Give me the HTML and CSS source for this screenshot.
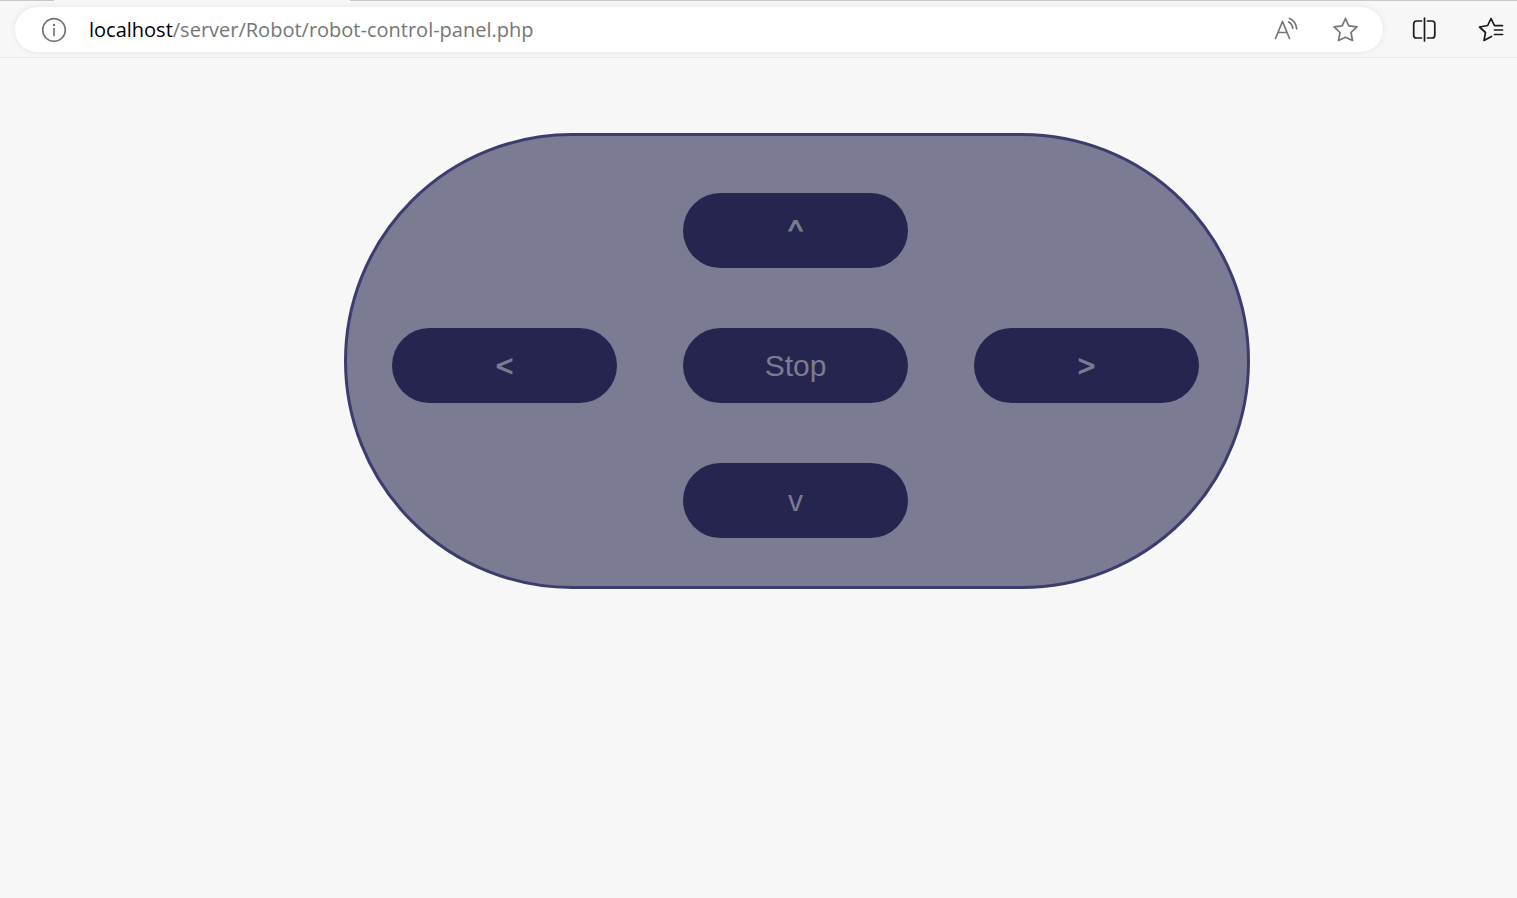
FILE: index.html
```html
<!DOCTYPE html>
<html lang="en">
<head>
<meta charset="utf-8">
<title>Robot control panel</title>
<link rel="stylesheet" href="styles.css">
</head>
<body>
<header class="browser">
  <div class="tab-strip"><span class="tab-edge tab-edge-left"></span><span class="tab-edge tab-edge-right"></span></div>
  <div class="toolbar">
    <div class="address-bar">
      <button class="icon-button" type="button" aria-label="Site information">
        <svg class="icon" viewBox="0 0 26 26"><circle cx="13" cy="13" r="11.3"/><path d="M13 11.5v7"/><circle class="dot" cx="13" cy="8" r="1.2"/></svg>
      </button>
      <a class="url" href="#"><span class="url-host">localhost</span>/server/Robot/robot-control-panel.php</a>
      <button class="icon-button" type="button" aria-label="Read aloud">
        <svg class="icon" viewBox="0 0 26 26"><path d="M3.500 21.500 10.500 4.500 17.500 21.500M6 15.500h9M16.500 5c2.300 1 3.900 3.400 4.200 6.300M17.500 1.500c4 1.500 6.500 5 7.200 10.400"/></svg>
      </button>
      <button class="icon-button" type="button" aria-label="Add to favorites">
        <svg class="icon" viewBox="0 0 26 26"><path d="M13.500 1.500 16.800 8.900 25 9.900 19 15.500 20.500 23.500 13.500 20.200 6.500 23.500 8 15.500 2 9.900 10.200 8.900Z"/></svg>
      </button>
    </div>
    <div class="actions">
      <button class="icon-button dark" type="button" aria-label="Split screen">
        <svg class="icon" viewBox="0 0 26 26"><path d="M13.500 1v23M10.500 4H5.500A2.800 2.800 0 0 0 2.700 6.800v11.400A2.800 2.800 0 0 0 5.500 21h5M16.500 4h4.500a2.800 2.800 0 0 1 2.800 2.800v11.400a2.800 2.800 0 0 1-2.800 2.800h-4.500"/></svg>
      </button>
      <button class="icon-button dark" type="button" aria-label="Favorites">
        <svg class="icon" viewBox="0 0 26 26"><path d="M24.500 8.700H16.500L13 1.500 9.700 8.500 1.500 10 7.500 15.500 6 23.500 13.500 19.500M16.500 13H24.500M16.500 17.500H24.500"/></svg>
      </button>
    </div>
  </div>
</header>
<main class="page">
  <form class="panel">
    <button class="control arrow up" type="button" aria-label="Forward">^</button>
    <button class="control arrow left" type="button" aria-label="Left">&lt;</button>
    <button class="control stop" type="button">Stop</button>
    <button class="control arrow right" type="button" aria-label="Right">&gt;</button>
    <button class="control down" type="button" aria-label="Backward">v</button>
  </form>
</main>
</body>
</html>
```

FILE: styles.css
```css
* {
  box-sizing: border-box;
}

body {
  margin: 0;
  background: #f7f7f7;
  font-family: "Liberation Sans", Arial, sans-serif;
}

.browser {
  border-bottom: 1px solid #e9e9e9;
}

.tab-strip {
  display: flex;
  justify-content: space-between;
  gap: 296px;
  height: 1px;
}

.tab-edge {
  background: #c8c8c8;
}

.tab-edge-left {
  width: 54px;
}

.tab-edge-right {
  flex: 1;
}

.toolbar {
  display: flex;
  align-items: center;
  gap: 28px;
  padding: 6px 13px 5px 15px;
}

.address-bar {
  display: flex;
  flex: 1;
  align-items: center;
  gap: 34px;
  height: 45px;
  padding: 0 25px 0 26px;
  border-radius: 23px;
  background: #fff;
  box-shadow: 0 0 6px rgba(0, 0, 0, 0.08);
}

.url {
  flex: 1;
  margin-left: -12px;
  color: #767676;
  font-family: "Segoe UI", "Open Sans", sans-serif;
  font-size: 20px;
  line-height: 28px;
  text-decoration: none;
  white-space: nowrap;
}

.url-host {
  color: #000;
}

.actions {
  display: flex;
  gap: 41px;
}

.icon-button {
  display: flex;
  padding: 0;
  border: 0;
  background: none;
  color: #767676;
}

.dark {
  color: #1b1b1b;
}

.icon {
  width: 26px;
  height: 26px;
  fill: none;
  stroke: currentColor;
  stroke-width: 1.7;
  stroke-linecap: round;
  stroke-linejoin: round;
}

.icon .dot {
  fill: currentColor;
  stroke: none;
}

.page {
  display: flex;
  justify-content: center;
  padding: 75px 0 0 77px;
}

.panel {
  display: grid;
  grid-template-areas:
    ". up ."
    "left stop right"
    ". down .";
  gap: 60px 66px;
  padding: 57px 48px 48px 45px;
  border: 3px solid #3c3c6e;
  border-radius: 228px;
  background: #7b7b93;
}

.control {
  width: 225px;
  height: 75px;
  padding: 0;
  border: 0;
  border-radius: 38px;
  background: #26254f;
  color: #7b7b93;
  font-family: inherit;
  font-size: 30px;
}

.arrow {
  -webkit-text-stroke: 1px currentColor;
}

.up {
  grid-area: up;
}

.left {
  grid-area: left;
}

.stop {
  grid-area: stop;
}

.right {
  grid-area: right;
}

.down {
  grid-area: down;
}
```
